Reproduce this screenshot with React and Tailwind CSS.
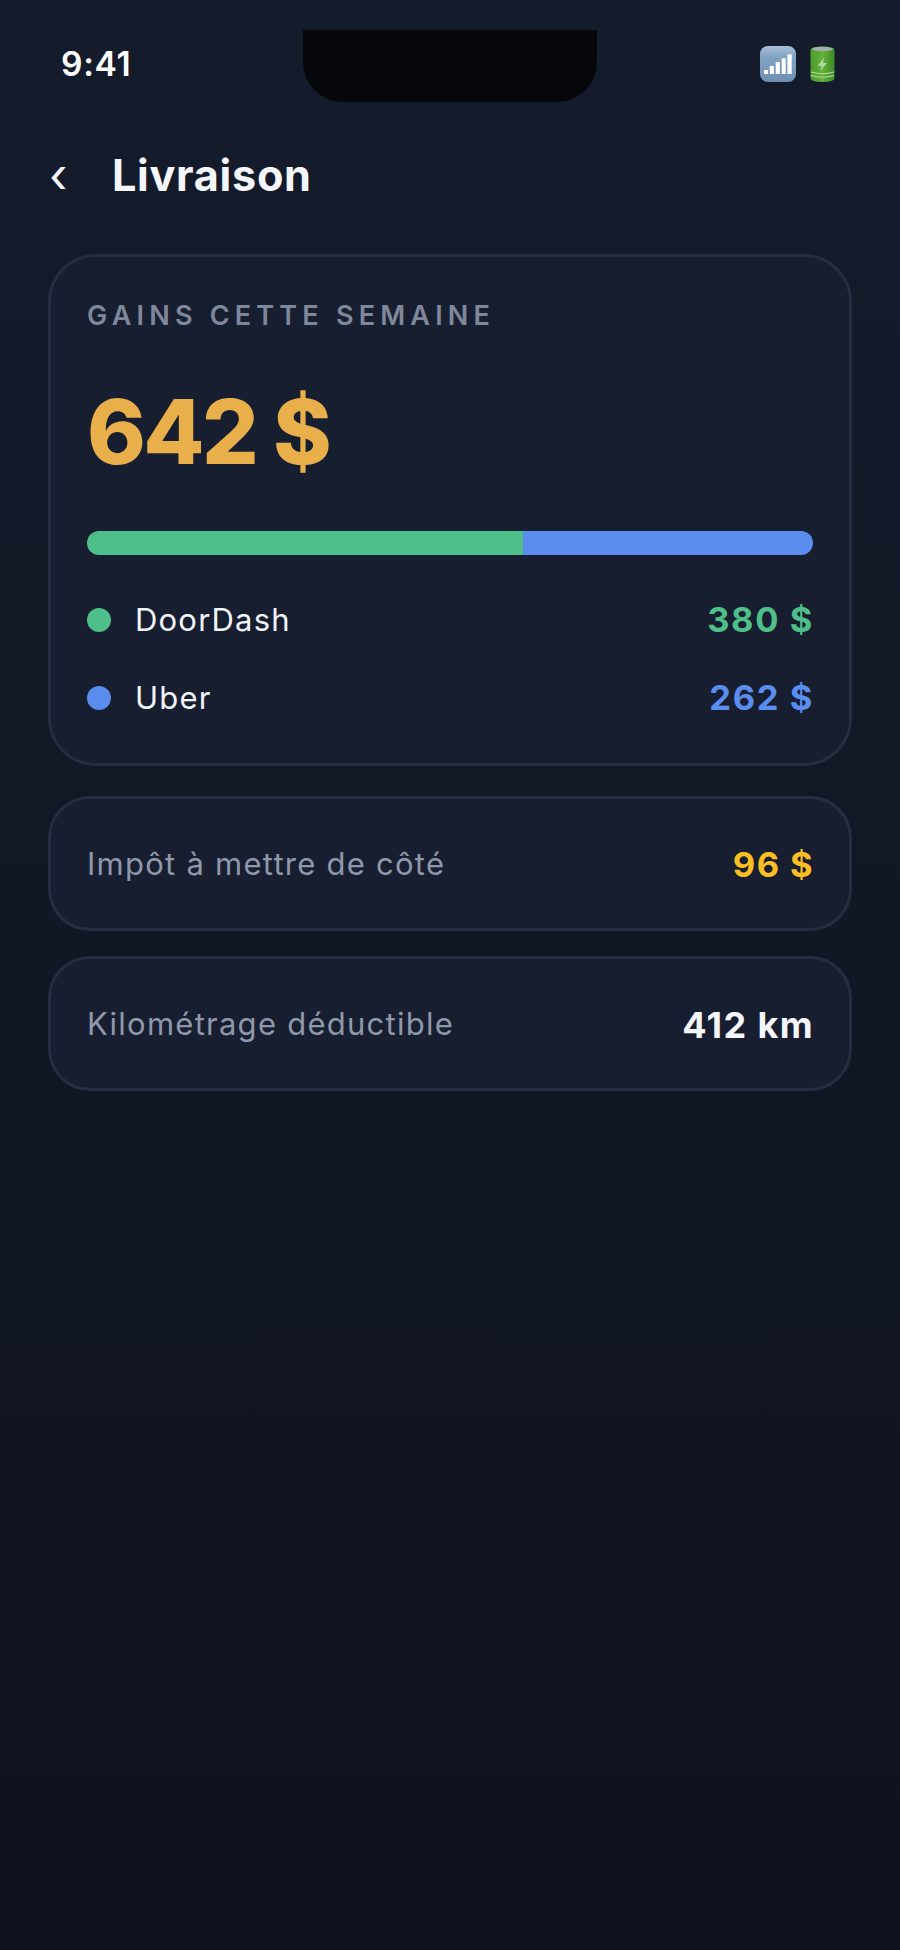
const font = { fontFamily: 'Inter, "Noto Sans", sans-serif' };

function SignalEmoji() {
    return (
        <svg width="36" height="36" viewBox="0 0 36 36">
            <defs>
                <linearGradient id="sig" x1="0" y1="0" x2="0" y2="1">
                    <stop offset="0" stopColor="#a7c0d6" />
                    <stop offset="0.3" stopColor="#83a3c2" />
                    <stop offset="1" stopColor="#6d8fb3" />
                </linearGradient>
            </defs>
            <rect x="0" y="0" width="36" height="36" rx="8" fill="url(#sig)" />
            <rect x="4" y="24" width="4" height="4" fill="#fff" />
            <rect x="9.7" y="20" width="4.2" height="8" fill="#fff" />
            <rect x="15.7" y="16" width="4.2" height="12" fill="#fff" />
            <rect x="21.7" y="12.3" width="4" height="15.7" fill="#fff" />
            <rect x="27.4" y="8.3" width="4.3" height="19.7" fill="#fff" />
        </svg>
    );
}

function BatteryEmoji() {
    return (
        <svg width="25" height="36" viewBox="0 0 25 36">
            <defs>
                <linearGradient id="bat" x1="0" y1="0" x2="1" y2="0">
                    <stop offset="0" stopColor="#4f9c2e" />
                    <stop offset="0.5" stopColor="#62b23c" />
                    <stop offset="1" stopColor="#3f8a26" />
                </linearGradient>
            </defs>
            <path d="M0.5 4 Q0.5 0.5 12.5 0.5 Q24.5 0.5 24.5 4 V32 Q24.5 36 12.5 36 Q0.5 36 0.5 32 Z" fill="url(#bat)" />
            <ellipse cx="12.5" cy="3" rx="10.5" ry="2.2" fill="#a3aeb0" />
            <path d="M14 11.5 L7.5 20 H11.5 L10 25 L17 17 H13 Z" fill="#b9d7a0" />
            <path d="M1 26 Q12.5 29.5 24 26" stroke="#b9d7a0" strokeWidth="1.2" fill="none" />
            <path d="M1 29.5 Q12.5 33 24 29.5" stroke="#b9d7a0" strokeWidth="1.2" fill="none" />
        </svg>
    );
}

function PayoutRow({ dot, name, amount, amountColor, className }) {
    return (
        <div className={`flex items-center justify-between ${className}`}>
            <div className="flex items-center gap-[24px]">
                <span className={`h-6 w-6 rounded-full ${dot}`} />
                <span className="text-[31px] leading-[38px] tracking-[1.2px] text-[#f1f4fa]">{name}</span>
            </div>
            <span className={`mr-[-1px] text-[34.5px] leading-[40px] font-bold tracking-[1.6px] ${amountColor}`}>{amount}</span>
        </div>
    );
}

function SummaryCard({ label, value, valueClass, className }) {
    return (
        <div className={`flex h-[135px] items-center justify-between rounded-[42px] border-[3px] border-[#262d40] bg-[#171e2f] px-[36px] pt-[2px] ${className}`}>
            <span className="text-[31px] tracking-[1.25px] text-[#8f98aa]">{label}</span>
            <span className={`mr-[-1px] font-bold tracking-[1.4px] ${valueClass}`}>{value}</span>
        </div>
    );
}

export default function App() {
    return (
        <div style={font} className="relative h-[1950px] w-[900px] overflow-hidden bg-gradient-to-b from-[#141b2b] to-[#0f131e]">
            <div className="absolute top-[30px] left-[303px] h-[72px] w-[294px] rounded-b-[40px] bg-[#05070b]" />

            <div className="flex h-[130px] items-start justify-between pt-[44px] pr-[65px] pl-[61px]">
                <span className="text-[33.6px] leading-[40px] font-semibold tracking-[0.7px] text-white">9:41</span>
                <div className="mt-[2px] flex items-center gap-[14px]">
                    <SignalEmoji />
                    <BatteryEmoji />
                </div>
            </div>

            <div className="flex h-[90px] items-center pl-[49px]">
                <span className="w-[63px] text-[48px] leading-none text-[#f4f6fc]">‹</span>
                <h1 className="text-[43.2px] font-bold tracking-[0.7px] text-[#f4f6fc]">Livraison</h1>
            </div>

            <div className="mx-[48px] mt-[34px] h-[512px] rounded-[48px] border-[3px] border-[#262d40] bg-[#171e2f] px-[36px] pt-[43px]">
                <p className="text-[27px] leading-[32px] font-semibold tracking-[5.2px] text-[#7f889b]">GAINS CETTE SEMAINE</p>
                <p className="mt-[45px] text-[89px] leading-[110px] font-extrabold tracking-[-2.6px] text-[#e8af4b]">642 $</p>
                <div className="mt-[44px] flex h-6 overflow-hidden rounded-xl">
                    <div className="w-[60%] bg-[#4fbf8a]" />
                    <div className="flex-1 bg-[#5b8def]" />
                </div>
                <PayoutRow className="mt-[45px]" dot="bg-[#4fbf8a]" name="DoorDash" amount="380 $" amountColor="text-[#4fbf8a]" />
                <PayoutRow className="mt-[38px]" dot="bg-[#5b8def]" name="Uber" amount="262 $" amountColor="text-[#5b8def]" />
            </div>

            <SummaryCard className="mx-[48px] mt-[30px]" label="Impôt à mettre de côté" value="96 $" valueClass="text-[34.5px] text-[#fbbf24]" />
            <SummaryCard className="mx-[48px] mt-[25px]" label="Kilométrage déductible" value="412 km" valueClass="text-[36px] text-[#f4f6fc]" />
        </div>
    );
}
